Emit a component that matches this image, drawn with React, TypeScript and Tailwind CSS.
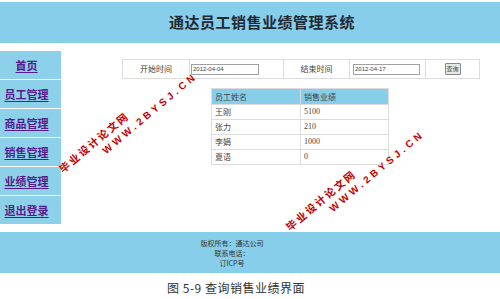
import React from 'react';

const menu = ['首页', '员工管理', '商品管理', '销售管理', '业绩管理', '退出登录'];

const rows = [
  { name: '王刚', amount: '5100' },
  { name: '张力', amount: '210' },
  { name: '李娟', amount: '1000' },
  { name: '夏语', amount: '0' },
];

function Watermark({ className }: { className: string }) {
  return (
    <div
      className={`absolute origin-top-left -rotate-[40deg] font-bold text-[#c40000] leading-[13px] whitespace-nowrap [text-shadow:0_0_1px_#fff,0_0_1px_#fff] pointer-events-none ${className}`}
    >
      <div className="text-[10.5px] tracking-[2px]">毕业设计论文网</div>
      <div className="ml-[45px] mt-[1px] text-[10px] tracking-[3.4px] font-['Liberation_Sans',sans-serif]">
        WWW.2BYSJ.CN
      </div>
    </div>
  );
}

export default function App() {
  return (
    <div className="relative w-[500px] h-[299px] overflow-hidden bg-white font-['Noto_Sans_CJK_SC',sans-serif] text-[#333]">
      <header className="mt-[2px] h-[41px] bg-[#87ceeb] flex items-center justify-center pl-[24px]">
        <h1 className="text-[15px] font-bold text-[#1f2a33] tracking-[0.5px]">通达员工销售业绩管理系统</h1>
      </header>

      <div className="flex mt-[8px] h-[173px]">
        <nav className="w-[61px] flex flex-col gap-[1px]">
          {menu.map((item) => (
            <div key={item} className="h-[28px] bg-[#8dd0ea] flex items-center justify-center pr-[8px]">
              <a href="#" className="text-[11px] font-bold text-[#551a8b] underline underline-offset-2">
                {item}
              </a>
            </div>
          ))}
        </nav>

        <main className="flex-1">
          <table className="ml-[61px] mt-[8px] w-[358px] border-collapse text-[8px] text-[#444]">
            <tbody>
              <tr className="h-[19px]">
                <td className="w-[67px] border border-[#dcdcdc] text-center">开始时间</td>
                <td className="w-[94px] border border-[#dcdcdc] pl-[1px]">
                  <div className="w-[68px] h-[11px] border border-[#a0a0a0] bg-white text-[6px] leading-[9px] pl-[1px] font-['Liberation_Sans',sans-serif]">
                    2012-04-04
                  </div>
                </td>
                <td className="w-[66px] border border-[#dcdcdc] text-center">结束时间</td>
                <td className="w-[76px] border border-[#dcdcdc] pl-[3px]">
                  <div className="w-[67px] h-[11px] border border-[#a0a0a0] bg-white text-[6px] leading-[9px] pl-[1px] font-['Liberation_Sans',sans-serif]">
                    2012-04-17
                  </div>
                </td>
                <td className="border border-[#dcdcdc]">
                  <div className="mx-auto w-[16px] h-[12px] border border-[#888] rounded-[1px] bg-[#e8e8e8] text-[6px] leading-[10px] text-center">
                    查询
                  </div>
                </td>
              </tr>
            </tbody>
          </table>

          <table className="ml-[150px] mt-[9px] w-[178px] border-collapse text-[8px] text-[#444]">
            <thead>
              <tr className="h-[16px] bg-[#87ceeb]">
                <th className="w-[89px] border border-[#dcdcdc] text-left font-normal pl-[3px]">员工姓名</th>
                <th className="border border-[#dcdcdc] text-left font-normal pl-[3px]">销售业绩</th>
              </tr>
            </thead>
            <tbody>
              {rows.map((r) => (
                <tr key={r.name} className="h-[15px]">
                  <td className="border border-[#dcdcdc] pl-[3px]">{r.name}</td>
                  <td className="border border-[#dcdcdc] pl-[3px] font-['Liberation_Serif',serif]">{r.amount}</td>
                </tr>
              ))}
            </tbody>
          </table>
        </main>
      </div>

      <footer className="mt-[8px] h-[41px] bg-[#87ceeb] pt-[6px] pr-[36px] text-center text-[7px] leading-[10px] text-[#333]">
        <p>版权所有：通达公司</p>
        <p>联系电话：</p>
        <p>订ICP号</p>
      </footer>

      <p className="pt-[7px] pr-[28px] text-center text-[12px] leading-[16px] text-[#333] tracking-[0.5px]">
        图 5-9 查询销售业绩界面
      </p>

      <Watermark className="left-[56px] top-[165px]" />
      <Watermark className="left-[283px] top-[223px]" />
    </div>
  );
}
